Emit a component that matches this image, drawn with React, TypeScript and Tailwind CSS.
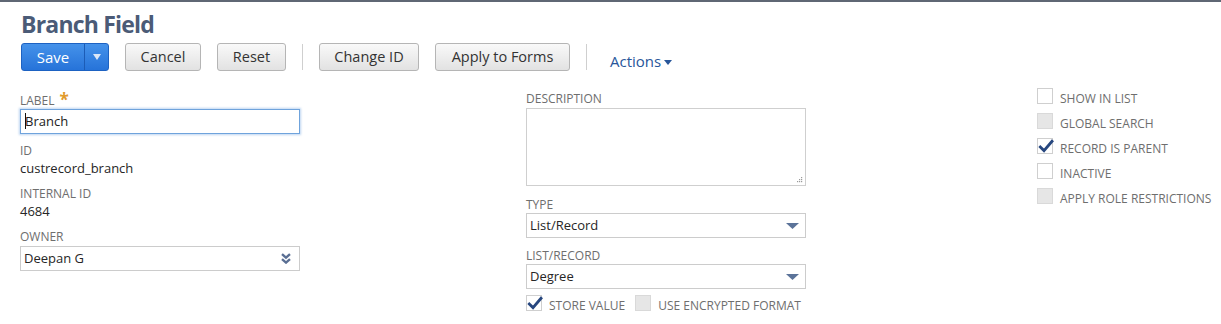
import React from "react";

const Label = ({ children }: { children: React.ReactNode }) => (
  <div className="text-[12px] leading-[16px] text-[#6e6e6e] uppercase">{children}</div>
);

const Value = ({ children }: { children: React.ReactNode }) => (
  <div className="text-[13px] leading-[18px] text-[#262626]">{children}</div>
);

const Tri = () => (
  <svg width="13" height="6" viewBox="0 0 13 6">
    <path d="M0 0H13L6.5 6Z" fill="#5b7399" />
  </svg>
);

const Select = ({ text }: { text: string }) => (
  <div className="flex h-[25px] items-center justify-between border border-[#cccccc] bg-white pl-[3px] pr-[6px] pt-[1px] text-[13px] text-[#262626]">
    <span>{text}</span>
    <Tri />
  </div>
);

const Check = () => (
  <svg width="17" height="16" viewBox="0 0 17 16" className="absolute left-[0px] top-[0px]">
    <path d="M2.3 8L6 11.6L14 2.3" fill="none" stroke="#27477f" strokeWidth="2.8" strokeLinecap="square" />
  </svg>
);

type Kind = "empty" | "disabled" | "checked";

const Box = ({ kind }: { kind: Kind }) => {
  if (kind === "disabled")
    return <div className="h-[16px] w-[16px] shrink-0 border border-[#d9d9d9] bg-[#e6e6e6]" />;
  return (
    <div className="relative h-[16px] w-[16px] shrink-0 border border-[#cfcfcf] bg-white">
      {kind === "checked" && <Check />}
    </div>
  );
};

const CheckRow = ({ kind, text }: { kind: Kind; text: string }) => (
  <div className="flex h-[16px] items-start">
    <Box kind={kind} />
    <span className="ml-[7px] mt-[3px] whitespace-nowrap text-[12px] leading-[16px] text-[#6e6e6e]">{text}</span>
  </div>
);

const GrayButton = ({ text, w }: { text: string; w: string }) => (
  <div
    className={`${w} flex h-[28px] items-center justify-center rounded-[3px] border border-[#b5b5b5] bg-gradient-to-b from-[#f9f9f9] to-[#e2e2e2] text-[14.5px] text-[#333333]`}
  >
    {text}
  </div>
);

export default function App() {
  return (
    <div className="h-[324px] w-[1221px] overflow-hidden border-t-2 border-[#5f6774] bg-white font-['Open_Sans',sans-serif]">
      <div className="pl-[20px] pt-[8px]">
        <div className="ml-px text-[23px] font-bold leading-[28px] tracking-[-0.8px] text-[#4b5b77]">Branch Field</div>
        <div className="mt-[5px] flex h-[28px] items-center gap-[16px]">
          <div className="ml-px flex h-[28px] rounded-[3px] border border-[#1d62c2] bg-gradient-to-b from-[#4592ea] to-[#2673d9] text-white">
            <span className="flex w-[62px] items-center justify-center text-[15px]">Save</span>
            <span className="flex w-[24px] items-center justify-center border-l border-[#1c5cb6]">
              <svg width="8" height="6" viewBox="0 0 8 6">
                <path d="M0 0H8L4 6Z" fill="#dce7f7" />
              </svg>
            </span>
          </div>
          <GrayButton text="Cancel" w="w-[76px]" />
          <GrayButton text="Reset" w="w-[69px]" />
          <div className="h-[26px] w-px bg-[#cfcfcf]" />
          <GrayButton text="Change ID" w="w-[100px]" />
          <GrayButton text="Apply to Forms" w="w-[135px]" />
          <div className="h-[26px] w-px bg-[#cfcfcf]" />
          <div className="ml-[7px] flex items-center pt-[8px] text-[15px] text-[#28569a]">
            <span>Actions</span>
            <svg width="8" height="5" viewBox="0 0 8 5" className="ml-[3px] mt-[2px]">
              <path d="M0 0H8L4 5Z" fill="#28569a" />
            </svg>
          </div>
        </div>

        <div className="mt-[17px] flex">
          {/* left column */}
          <div className="w-[506px] pt-[5px]">
            <div className="w-[280px]">
              <div className="flex h-[16px] items-start">
                <Label>Label</Label>
                <span className="ml-[5px] mt-[-3px] text-[17px] font-bold leading-[20px] text-[#e19a2c]">*</span>
              </div>
              <div className="flex h-[25px] items-center border border-[#6fa3dc] bg-white pl-[4px] text-[13px] text-[#222222] shadow-[0_0_2px_1px_rgba(110,165,225,0.45)]">
                <span className="relative">
                  <span className="absolute left-[0px] top-[1px] h-[16px] w-px bg-[#111111]" />
                  Branch
                </span>
              </div>
              <div className="mt-[9px]">
                <Label>ID</Label>
                <Value>custrecord_branch</Value>
              </div>
              <div className="mt-[9px]">
                <Label>Internal ID</Label>
                <Value>4684</Value>
              </div>
              <div className="mt-[9px]">
                <Label>Owner</Label>
                <div className="mt-px flex h-[25px] items-center justify-between border border-[#cccccc] bg-white pl-[3px] pr-[8px] text-[13px] text-[#262626]">
                  <span>Deepan G</span>
                  <svg width="10" height="11" viewBox="0 0 10 11">
                    <path d="M1 1.2L5 4.6L9 1.2M1 6.2L5 9.6L9 6.2" fill="none" stroke="#5a6f94" strokeWidth="2.4" />
                  </svg>
                </div>
              </div>
            </div>
          </div>

          {/* middle column */}
          <div className="w-[511px] pt-[3px]">
            <div className="w-[280px]">
              <Label>Description</Label>
              <div className="relative mt-px h-[78px] border border-[#cfcfcf] bg-white">
                <svg width="7" height="7" viewBox="0 0 7 7" className="absolute bottom-[2px] right-[2px]">
                  <rect x="5" y="1" width="1.2" height="1.2" fill="#9a9a9a" />
                  <rect x="3" y="3" width="1.2" height="1.2" fill="#9a9a9a" />
                  <rect x="5" y="3" width="1.2" height="1.2" fill="#9a9a9a" />
                  <rect x="1" y="5" width="1.2" height="1.2" fill="#9a9a9a" />
                  <rect x="3" y="5" width="1.2" height="1.2" fill="#9a9a9a" />
                  <rect x="5" y="5" width="1.2" height="1.2" fill="#9a9a9a" />
                </svg>
              </div>
              <div className="mt-[11px]">
                <Label>Type</Label>
                <Select text="List/Record" />
              </div>
              <div className="mt-[10px]">
                <Label>List/Record</Label>
                <Select text="Degree" />
              </div>
              <div className="mt-[6px] flex items-start">
                <CheckRow kind="checked" text="STORE VALUE" />
                <div className="ml-[10px]">
                  <CheckRow kind="disabled" text="USE ENCRYPTED FORMAT" />
                </div>
              </div>
            </div>
          </div>

          {/* right column */}
          <div className="flex flex-col gap-[9px]">
            <CheckRow kind="empty" text="SHOW IN LIST" />
            <CheckRow kind="disabled" text="GLOBAL SEARCH" />
            <CheckRow kind="checked" text="RECORD IS PARENT" />
            <CheckRow kind="empty" text="INACTIVE" />
            <CheckRow kind="disabled" text="APPLY ROLE RESTRICTIONS" />
          </div>
        </div>
      </div>
    </div>
  );
}
